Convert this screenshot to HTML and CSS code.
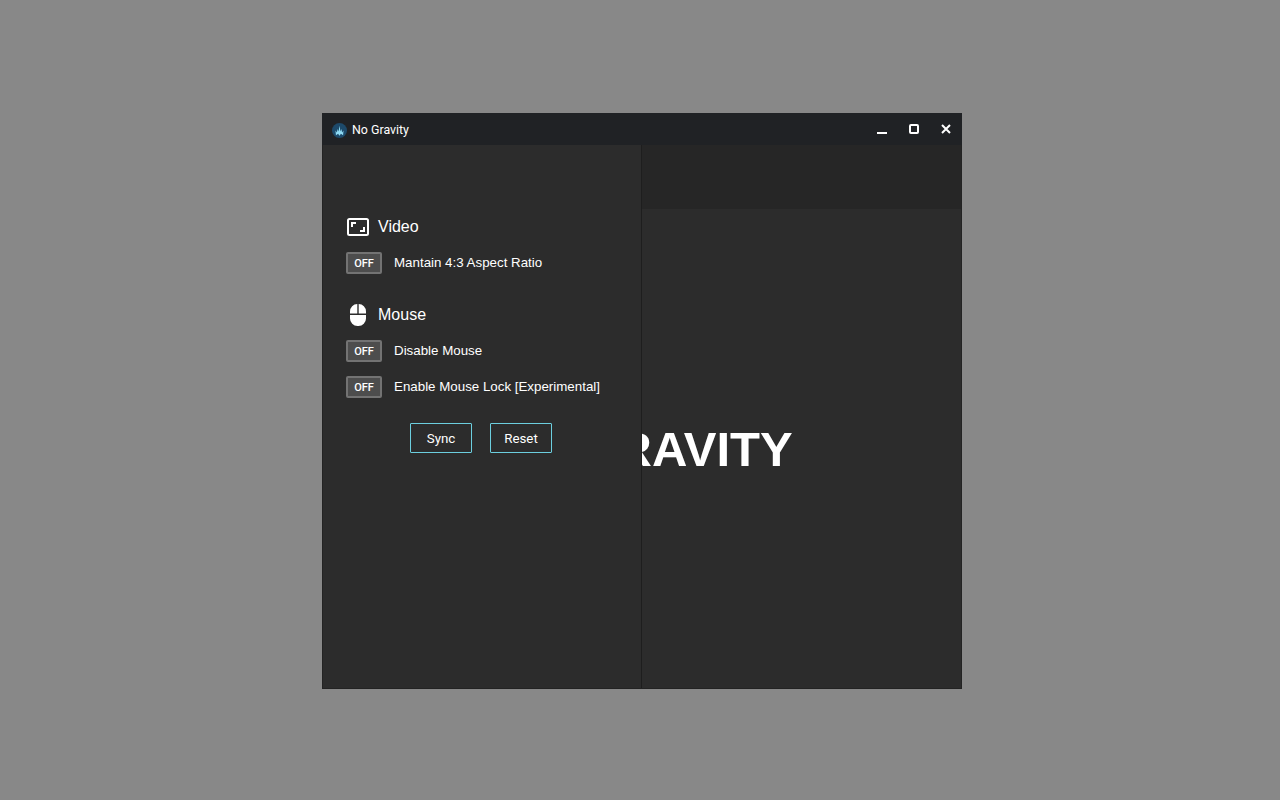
FILE: index.html
```html
<!DOCTYPE html>
<html lang="en">
<head>
<meta charset="utf-8">
<title>No Gravity</title>
<link rel="stylesheet" href="styles.css">
</head>
<body>
<div class="window">
  <header class="titlebar">
    <svg class="app-icon" width="15" height="15" viewBox="0 0 16 16" aria-hidden="true">
      <circle cx="8" cy="8" r="8" fill="#1d4a6b"/>
      <path d="M8 3 9 9 10 6.500 10.800 10 12.300 8 11.800 13 9.500 11.500 8 13.500 6.500 11.500 4.200 13 3.700 8 5.200 10 6 6.500 7 9Z" fill="#8fdcf5"/>
    </svg>
    <span class="app-title">No Gravity</span>
    <div class="controls">
      <span class="control"><svg width="10" height="10" viewBox="0 0 10 10"><rect y="8" width="10" height="2" fill="#fff"/></svg></span>
      <span class="control"><svg width="10" height="10" viewBox="0 0 10 10"><rect x="1" y="1" width="8" height="8" rx="1" fill="none" stroke="#fff" stroke-width="2"/></svg></span>
      <span class="control"><svg width="10" height="10" viewBox="0 0 10 10"><path d="M1 1 9 9M9 1 1 9" stroke="#fff" stroke-width="2" fill="none"/></svg></span>
    </div>
  </header>
  <div class="body">
    <main class="main">
      <div class="main-top"></div>
      <div class="main-center"><h1 class="logo-text">NO GRAVITY</h1></div>
    </main>
    <aside class="sidebar">
      <section class="group">
        <h2 class="group-title">
          <span class="group-icon">
            <svg width="22" height="18" viewBox="0 0 22 18"><rect x="1" y="1" width="20" height="16" rx="1.500" fill="none" stroke="#fff" stroke-width="2"/><path d="M4 9V4H9V6H6V9ZM18 9V14H13V12H16V9Z" fill="#fff"/></svg>
          </span>
          Video
        </h2>
        <div class="option"><span class="toggle">OFF</span><span class="label">Mantain 4:3 Aspect Ratio</span></div>
      </section>
      <section class="group">
        <h2 class="group-title">
          <span class="group-icon">
            <svg width="16" height="22" viewBox="0 0 16 22"><path d="M7.300 0V9.500H0V7.500A7.500 7.500 0 0 1 7.300 0ZM8.700 0A7.500 7.500 0 0 1 16 7.500V9.500H8.700ZM0 11H16V14.500A7.500 7.500 0 0 1 8.500 22H7.500A7.500 7.500 0 0 1 0 14.500Z" fill="#fff"/></svg>
          </span>
          Mouse
        </h2>
        <div class="option"><span class="toggle">OFF</span><span class="label">Disable Mouse</span></div>
        <div class="option"><span class="toggle">OFF</span><span class="label">Enable Mouse Lock [Experimental]</span></div>
      </section>
      <div class="actions">
        <button class="btn">Sync</button>
        <button class="btn">Reset</button>
      </div>
    </aside>
  </div>
</div>
</body>
</html>
```
FILE: styles.css
```css
* { box-sizing: border-box; }
html, body { height: 100%; }
body {
  margin: 0;
  background: #888;
  font-family: "Liberation Sans", Arial, sans-serif;
  color: #fff;
  overflow: hidden;
}
.window {
  position: absolute;
  left: 322px;
  top: 113px;
  width: 640px;
  height: 576px;
  display: flex;
  flex-direction: column;
  background: #2c2c2c;
  box-shadow: inset 0 0 0 1px #232323;
}
.titlebar {
  flex: none;
  height: 32px;
  display: flex;
  align-items: center;
  padding-left: 10px;
  background: #202225;
}
.app-icon { flex: none; margin-top: 3px; }
.app-title {
  margin: 0 0 0 5px;
  font: 12.4px Roboto, sans-serif;
  color: #fff;
}
.controls { margin-left: auto; display: flex; height: 100%; }
.control {
  width: 32px;
  height: 100%;
  display: flex;
  align-items: center;
  justify-content: center;
}
.body {
  position: relative;
  flex: 1;
  min-height: 0;
  margin: 0 1px 1px;
}
.main { height: 100%; display: flex; flex-direction: column; }
.main-top { flex: none; height: 64px; background: #262626; }
.main-center {
  flex: 1;
  display: flex;
  align-items: center;
  justify-content: center;
}
.logo-text {
  margin: 0;
  font-size: 49px;
  font-weight: 700;
  line-height: 56px;
  white-space: nowrap;
}
.sidebar {
  position: absolute;
  left: 0;
  top: 0;
  bottom: 0;
  width: 319px;
  padding: 64px 23px 0;
  background: #2c2c2c;
  border-right: 1px solid #1e1e1e;
}
.group { margin-bottom: 16px; }
.group-title {
  margin: 0;
  height: 36px;
  display: flex;
  align-items: center;
  font-size: 16px;
  font-weight: 400;
}
.group-icon {
  width: 24px;
  margin-right: 8px;
  display: flex;
  justify-content: center;
}
.option {
  height: 36px;
  display: flex;
  align-items: center;
}
.toggle {
  width: 36px;
  height: 22px;
  display: flex;
  align-items: center;
  justify-content: center;
  background: #4d4d4d;
  border: 2px solid #737373;
  border-radius: 2px;
  font: 500 11px Roboto, sans-serif;
}
.label {
  margin: -2px 0 0 12px;
  font-size: 13.33px;
}
.actions {
  display: flex;
  justify-content: center;
  gap: 18px;
  margin: 18px 2px 0 0;
}
.btn {
  width: 62px;
  height: 30px;
  padding: 0;
  background: transparent;
  border: 1px solid #6ccfdf;
  border-radius: 1px;
  color: #fff;
  font: 13.33px Roboto, sans-serif;
}
```
